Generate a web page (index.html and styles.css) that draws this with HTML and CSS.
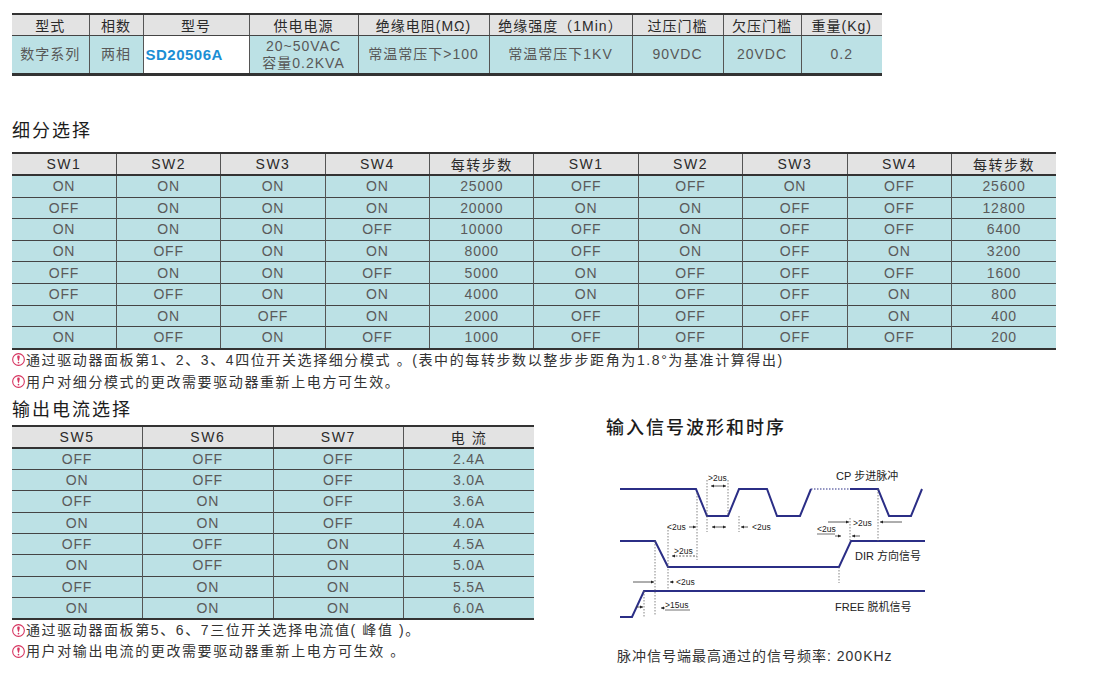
FILE: index.html
```html
<!DOCTYPE html>
<html lang="zh-CN">
<head>
<meta charset="utf-8">
<title>SD20506A</title>
<link rel="stylesheet" href="styles.css">
</head>
<body>
<div class="page">
  <table class="spec">
    <colgroup>
      <col style="width:77px"><col style="width:54px"><col style="width:106px"><col style="width:109px"><col style="width:131px"><col style="width:143px"><col style="width:91px"><col style="width:78px"><col style="width:81px">
    </colgroup>
    <thead>
      <tr><th>型式</th><th>相数</th><th>型号</th><th>供电电源</th><th>绝缘电阻(MΩ)</th><th>绝缘强度（1Min）</th><th>过压门槛</th><th>欠压门槛</th><th>重量(Kg)</th></tr>
    </thead>
    <tbody>
      <tr><td>数字系列</td><td>两相</td><td class="model">SD20506A</td><td class="two">20~50VAC<br>容量0.2KVA</td><td>常温常压下&gt;100</td><td>常温常压下1KV</td><td>90VDC</td><td>20VDC</td><td>0.2</td></tr>
    </tbody>
  </table>

  <h2 class="sec-title first">细分选择</h2>
  <table class="grid sub">
    <thead>
      <tr><th>SW1</th><th>SW2</th><th>SW3</th><th>SW4</th><th>每转步数</th><th>SW1</th><th>SW2</th><th>SW3</th><th>SW4</th><th>每转步数</th></tr>
    </thead>
    <tbody>
      <tr><td>ON</td><td>ON</td><td>ON</td><td>ON</td><td>25000</td><td>OFF</td><td>OFF</td><td>ON</td><td>OFF</td><td>25600</td></tr>
      <tr><td>OFF</td><td>ON</td><td>ON</td><td>ON</td><td>20000</td><td>ON</td><td>ON</td><td>OFF</td><td>OFF</td><td>12800</td></tr>
      <tr><td>ON</td><td>ON</td><td>ON</td><td>OFF</td><td>10000</td><td>OFF</td><td>ON</td><td>OFF</td><td>OFF</td><td>6400</td></tr>
      <tr><td>ON</td><td>OFF</td><td>ON</td><td>ON</td><td>8000</td><td>OFF</td><td>ON</td><td>OFF</td><td>ON</td><td>3200</td></tr>
      <tr><td>OFF</td><td>ON</td><td>ON</td><td>OFF</td><td>5000</td><td>ON</td><td>OFF</td><td>OFF</td><td>OFF</td><td>1600</td></tr>
      <tr><td>OFF</td><td>OFF</td><td>ON</td><td>ON</td><td>4000</td><td>ON</td><td>OFF</td><td>OFF</td><td>ON</td><td>800</td></tr>
      <tr><td>ON</td><td>ON</td><td>OFF</td><td>ON</td><td>2000</td><td>OFF</td><td>OFF</td><td>OFF</td><td>ON</td><td>400</td></tr>
      <tr><td>ON</td><td>OFF</td><td>ON</td><td>OFF</td><td>1000</td><td>OFF</td><td>OFF</td><td>OFF</td><td>OFF</td><td>200</td></tr>
    </tbody>
  </table>
  <div class="notes">
    <p><svg class="ico" viewBox="0 0 12 12"><circle cx="6" cy="6" r="5.4"/><path d="M6 2.4c1 0 1.3.6 1.1 1.7L6.4 7.2h-.8L4.9 4.1C4.7 3 5 2.4 6 2.4z"/><circle class="dot" cx="6" cy="8.8" r=".8"/></svg>通过驱动器面板第1、2、3、4四位开关选择细分模式 。(表中的每转步数以整步步距角为1.8°为基准计算得出)</p>
    <p><svg class="ico" viewBox="0 0 12 12"><circle cx="6" cy="6" r="5.4"/><path d="M6 2.4c1 0 1.3.6 1.1 1.7L6.4 7.2h-.8L4.9 4.1C4.7 3 5 2.4 6 2.4z"/><circle class="dot" cx="6" cy="8.8" r=".8"/></svg>用户对细分模式的更改需要驱动器重新上电方可生效。</p>
  </div>

  <div class="lower">
    <div class="left">
      <h2 class="sec-title">输出电流选择</h2>
      <table class="grid cur">
        <thead>
          <tr><th>SW5</th><th>SW6</th><th>SW7</th><th>电 流</th></tr>
        </thead>
        <tbody>
          <tr><td>OFF</td><td>OFF</td><td>OFF</td><td>2.4A</td></tr>
          <tr><td>ON</td><td>OFF</td><td>OFF</td><td>3.0A</td></tr>
          <tr><td>OFF</td><td>ON</td><td>OFF</td><td>3.6A</td></tr>
          <tr><td>ON</td><td>ON</td><td>OFF</td><td>4.0A</td></tr>
          <tr><td>OFF</td><td>OFF</td><td>ON</td><td>4.5A</td></tr>
          <tr><td>ON</td><td>OFF</td><td>ON</td><td>5.0A</td></tr>
          <tr><td>OFF</td><td>ON</td><td>ON</td><td>5.5A</td></tr>
          <tr><td>ON</td><td>ON</td><td>ON</td><td>6.0A</td></tr>
        </tbody>
      </table>
      <div class="notes tight">
        <p><svg class="ico" viewBox="0 0 12 12"><circle cx="6" cy="6" r="5.4"/><path d="M6 2.4c1 0 1.3.6 1.1 1.7L6.4 7.2h-.8L4.9 4.1C4.7 3 5 2.4 6 2.4z"/><circle class="dot" cx="6" cy="8.8" r=".8"/></svg>通过驱动器面板第5、6、7三位开关选择电流值( 峰值 )。</p>
        <p><svg class="ico" viewBox="0 0 12 12"><circle cx="6" cy="6" r="5.4"/><path d="M6 2.4c1 0 1.3.6 1.1 1.7L6.4 7.2h-.8L4.9 4.1C4.7 3 5 2.4 6 2.4z"/><circle class="dot" cx="6" cy="8.8" r=".8"/></svg>用户对输出电流的更改需要驱动器重新上电方可生效 。</p>
      </div>
    </div>
    <div class="right">
      <h2 class="sec-title strong">输入信号波形和时序</h2>
      <svg class="wave" width="330" height="190" viewBox="606 445 330 190">
        <defs>
          <marker id="ah" viewBox="0 0 6 6" refX="6" refY="3" markerWidth="4" markerHeight="4" orient="auto-start-reverse">
            <path d="M0 0L6 3L0 6z" fill="#222"/>
          </marker>
        </defs>
        <g class="sig">
          <path d="M620 489H696L707 516H728L739 489H767L777 516H800L811 489"/>
          <path d="M850 489H878L889 516H911L922 489"/>
          <path d="M620 541H655L668 567H839L851 541H925"/>
          <path d="M620 617H632L644 591H925"/>
        </g>
        <path class="dots-sig" d="M811 489H850"/>
        <g class="guide">
          <path d="M655 541V616"/>
          <path d="M668 527V590"/>
          <path d="M697 493V560"/>
          <path d="M707 480V532"/>
          <path d="M728 480V516"/>
          <path d="M739 516V532"/>
          <path d="M644 591V618"/>
          <path d="M839 567V583"/>
          <path d="M850 518V541"/>
          <path d="M878 489V541"/>
        </g>
        <g class="arr">
          <path d="M711 486H726" marker-start="url(#ah)" marker-end="url(#ah)"/>
          <path d="M689 527H696" marker-end="url(#ah)"/>
          <path d="M712 527H726" marker-start="url(#ah)" marker-end="url(#ah)"/>
          <path d="M748 527H741" marker-end="url(#ah)"/>
          <path d="M828 522H849" marker-end="url(#ah)"/>
          <path d="M902 522H880" marker-end="url(#ah)"/>
          <path d="M835 536H841" marker-end="url(#ah)"/>
          <path d="M860 536H852" marker-end="url(#ah)"/>
          <path class="dash" d="M672 556H697" marker-start="url(#ah)"/>
          <path d="M633 582H654" marker-end="url(#ah)"/>
          <path d="M674 582H670" marker-end="url(#ah)"/>
          <path d="M636 607H643" marker-end="url(#ah)"/>
          <path d="M665 608H661" marker-end="url(#ah)"/>
          <path class="thin" d="M665 610H690"/>
          <path class="thin" d="M817 534H835"/>
        </g>
        <g class="ann">
          <text x="708" y="481">&gt;2us</text>
          <text x="667" y="530">&lt;2us</text>
          <text x="752" y="530">&lt;2us</text>
          <text x="853" y="526">&gt;2us</text>
          <text x="817" y="532">&lt;2us</text>
          <text x="674" y="554">&gt;2us</text>
          <text x="676" y="585">&lt;2us</text>
          <text x="665" y="608">&gt;15us</text>
        </g>
        <g class="lbl">
          <text x="836" y="480">CP 步进脉冲</text>
          <text x="855" y="560">DIR 方向信号</text>
          <text x="835" y="611">FREE 脱机信号</text>
        </g>
      </svg>
      <p class="freq">脉冲信号端最高通过的信号频率: 200KHz</p>
    </div>
  </div>
</div>
</body>
</html>
```
FILE: styles.css
```css
html, body {
  margin: 0;
  padding: 0;
  background: #ffffff;
}
body {
  font-family: "Liberation Sans", "Noto Sans CJK SC", sans-serif;
  color: #333;
}
.page {
  padding: 13px 0 0 12px;
  width: 1088px;
}

/* spec table */
.spec {
  border-collapse: collapse;
  table-layout: fixed;
  width: 870px;
  border-top: 2px solid #333;
  border-bottom: 3px solid #333;
}
.spec th, .spec td {
  padding: 0;
  text-align: center;
  font-size: 14px;
  letter-spacing: 1px;
  border-left: 1px solid #555;
}
.spec th:first-child, .spec td:first-child { border-left: none; }
.spec th {
  height: 20px;
  background: #e3e3e3;
  color: #2a2a2a;
  font-weight: normal;
  border-bottom: 1px solid #444;
}
.spec td {
  height: 37px;
  background: #bce1e5;
  color: #585858;
  line-height: 17px;
}
.spec td.model {
  background: #ffffff;
  color: #1b8ed4;
  font-weight: bold;
  font-size: 15px;
  text-align: left;
  padding-left: 2px;
  letter-spacing: 0.5px;
}
.spec td.two { line-height: 17px; }

/* section titles */
.sec-title {
  margin: 0;
  font-size: 18px;
  line-height: 24px;
  font-weight: normal;
  color: #1c1c1c;
  letter-spacing: 2px;
}
.sec-title.strong { font-weight: 500; }
.sec-title.first {
  margin-top: 43px;
  margin-bottom: 9px;
}

/* grid tables */
.grid {
  border-collapse: collapse;
  table-layout: fixed;
  border-top: 2px solid #333;
  border-bottom: 2px solid #333;
}
.grid.sub { width: 1044px; }
.grid.cur { width: 522px; margin-top: 3px; }
.grid th, .grid td {
  padding: 0;
  text-align: center;
  font-size: 14px;
  letter-spacing: 0.8px;
  border-left: 1px solid #555;
}
.grid th:first-child, .grid td:first-child { border-left: none; }
.grid th {
  height: 20px;
  background: #e3e3e3;
  color: #2a2a2a;
  font-weight: normal;
  letter-spacing: 1.5px;
  border-bottom: 2px solid #333;
}
.grid td {
  height: 20.6px;
  line-height: 20px;
  background: #bce1e5;
  color: #5a5a5a;
  border-top: 1px solid #444;
}
.grid.cur td { height: 20.3px; }
.grid tbody tr:first-child td { border-top: none; }

/* notes */
.notes {
  margin-top: -1px;
}
.notes p {
  margin: 0;
  font-size: 14px;
  line-height: 22px;
  letter-spacing: 1.6px;
  color: #333;
  display: flex;
  align-items: center;
}
.notes.tight { margin-top: 0; }
.notes.tight p { line-height: 21px; }
.ico {
  width: 13px;
  height: 13px;
  margin-right: 1px;
  flex: none;
}
.ico circle {
  fill: none;
  stroke: #d6335f;
  stroke-width: 1;
}
.ico path { fill: #d6335f; }
.ico circle.dot { fill: #d6335f; stroke: none; }

/* lower section */
.lower {
  display: flex;
  margin-top: 5px;
}
.left { width: 522px; flex: none; }
.right {
  margin-left: 72px;
  padding-top: 18px;
  width: 400px;
}
.wave {
  display: block;
  margin-top: 5px;
}
.sig path {
  fill: none;
  stroke: #2b2e86;
  stroke-width: 2;
}
.dots-sig {
  fill: none;
  stroke: #2b2e86;
  stroke-width: 1.2;
  stroke-dasharray: 1.5 1.5;
}
.guide path {
  fill: none;
  stroke: #666;
  stroke-width: 0.8;
  stroke-dasharray: 1.5 1.5;
}
.arr path {
  fill: none;
  stroke: #333;
  stroke-width: 0.8;
}
.arr path.dash { stroke-dasharray: 2 1.5; }
.arr path.thin { stroke-width: 0.7; }
.ann text {
  font-family: "Liberation Sans", sans-serif;
  font-size: 8.5px;
  fill: #222;
}
.lbl text {
  font-family: "Liberation Sans", "Noto Sans CJK SC", sans-serif;
  font-size: 11px;
  fill: #222;
}
.freq {
  margin: 10px 0 0 11px;
  font-size: 14px;
  line-height: 22px;
  letter-spacing: 1px;
  color: #333;
}
```
